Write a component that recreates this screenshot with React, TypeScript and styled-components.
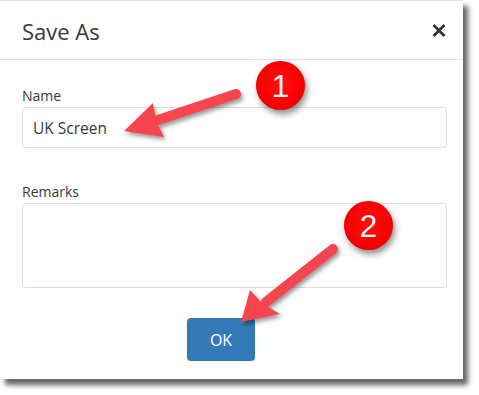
import React from 'react';
import styled, { createGlobalStyle } from 'styled-components';

const GlobalStyle = createGlobalStyle`
  html, body {
    margin: 0;
    padding: 0;
    background: #ffffff;
    font-family: "Open Sans", "Noto Sans", Arial, sans-serif;
  }
`;

const Page = styled.div`
  position: relative;
  width: 479px;
  height: 395px;
  overflow: hidden;
`;

const Dialog = styled.div`
  position: relative;
  width: 463px;
  background: #fff;
  border-top: 1px solid #dedede;
  box-shadow: 5px 6px 5px rgba(0, 0, 0, 0.6);
`;

const Header = styled.div`
  display: flex;
  align-items: center;
  justify-content: space-between;
  height: 58px;
  padding: 0 17px 0 22px;
  border-bottom: 1px solid #e5e5e5;
`;

const Title = styled.h2`
  margin: 1px 0 0;
  font-size: 22px;
  line-height: 30px;
  font-weight: 400;
  color: #383838;
`;

const CloseButton = styled.button`
  display: flex;
  padding: 0;
  border: 0;
  background: none;
  cursor: pointer;
`;

const Body = styled.div`
  padding: 26px 16px 18px 22px;
`;

const Label = styled.label<{ $gap?: number }>`
  display: block;
  margin-top: ${(p) => p.$gap ?? 0}px;
  margin-bottom: 1px;
  font-size: 14px;
  line-height: 20px;
  color: #383838;
`;

const TextInput = styled.input`
  display: block;
  box-sizing: border-box;
  width: 100%;
  height: 41px;
  padding: 0 10px;
  border: 1px solid #dcdcdc;
  border-radius: 4px;
  font-family: inherit;
  font-size: 15.5px;
  color: #383838;
  outline: none;
`;

const TextArea = styled.textarea`
  display: block;
  box-sizing: border-box;
  width: 100%;
  height: 85px;
  padding: 8px 10px;
  border: 1px solid #dcdcdc;
  border-radius: 4px;
  font-family: inherit;
  font-size: 16px;
  resize: none;
  outline: none;
`;

const Footer = styled.div`
  display: flex;
  padding: 30px 0 0 165px;
`;

const OkButton = styled.button`
  width: 68px;
  height: 43px;
  border: 0;
  border-radius: 4px;
  background: #337ab7;
  color: #fff;
  font-family: inherit;
  font-size: 16px;
  cursor: pointer;
`;

// numbered red callouts laid over the dialog
const Badge = styled.div<{ $x: number; $y: number }>`
  position: absolute;
  left: ${(p) => p.$x}px;
  top: ${(p) => p.$y}px;
  width: 49px;
  height: 49px;
  border-radius: 50%;
  display: flex;
  align-items: center;
  justify-content: center;
  background: radial-gradient(circle at 50% 45%, #ff1010 0%, #f80000 60%, #d80000 100%);
  color: #f4f4f4;
  font-family: "Liberation Sans", Arial, sans-serif;
  font-size: 32px;
  line-height: 1;
  filter: drop-shadow(2px 4px 3px rgba(0, 0, 0, 0.45));
`;

const Overlay = styled.svg`
  position: absolute;
  left: 0;
  top: 0;
  pointer-events: none;
  filter: drop-shadow(2px 3px 2px rgba(0, 0, 0, 0.4));
`;

type ArrowProps = { tail: [number, number]; neck: [number, number]; head: string };

const Arrow = ({ tail, neck, head }: ArrowProps) => (
  <g fill="#f6454e" stroke="#f6454e">
    <line x1={tail[0]} y1={tail[1]} x2={neck[0]} y2={neck[1]} strokeWidth={10} strokeLinecap="round" />
    <polygon points={head} stroke="none" />
  </g>
);

const CloseIcon = () => (
  <svg width="14" height="13" viewBox="0 0 14 13">
    <path d="M1.5 1 L12.5 12 M12.5 1 L1.5 12" stroke="#333" strokeWidth="2.8" />
  </svg>
);

export default function App() {
  return (
    <Page>
      <GlobalStyle />
      <Dialog>
        <Header>
          <Title>Save As</Title>
          <CloseButton aria-label="Close">
            <CloseIcon />
          </CloseButton>
        </Header>
        <Body>
          <Label>Name</Label>
          <TextInput defaultValue="UK Screen" />
          <Label $gap={34}>Remarks</Label>
          <TextArea />
          <Footer>
            <OkButton>OK</OkButton>
          </Footer>
        </Body>
      </Dialog>
      <Overlay width="479" height="395">
        <Arrow tail={[236, 94]} neck={[158, 120]} head="124,131 153,103 156,121 164,137" />
        <Arrow tail={[333, 249]} neck={[266, 302]} head="241,322 250,290 263,304 280,314" />
      </Overlay>
      <Badge $x={256} $y={61}>1</Badge>
      <Badge $x={344} $y={201}>2</Badge>
    </Page>
  );
}
